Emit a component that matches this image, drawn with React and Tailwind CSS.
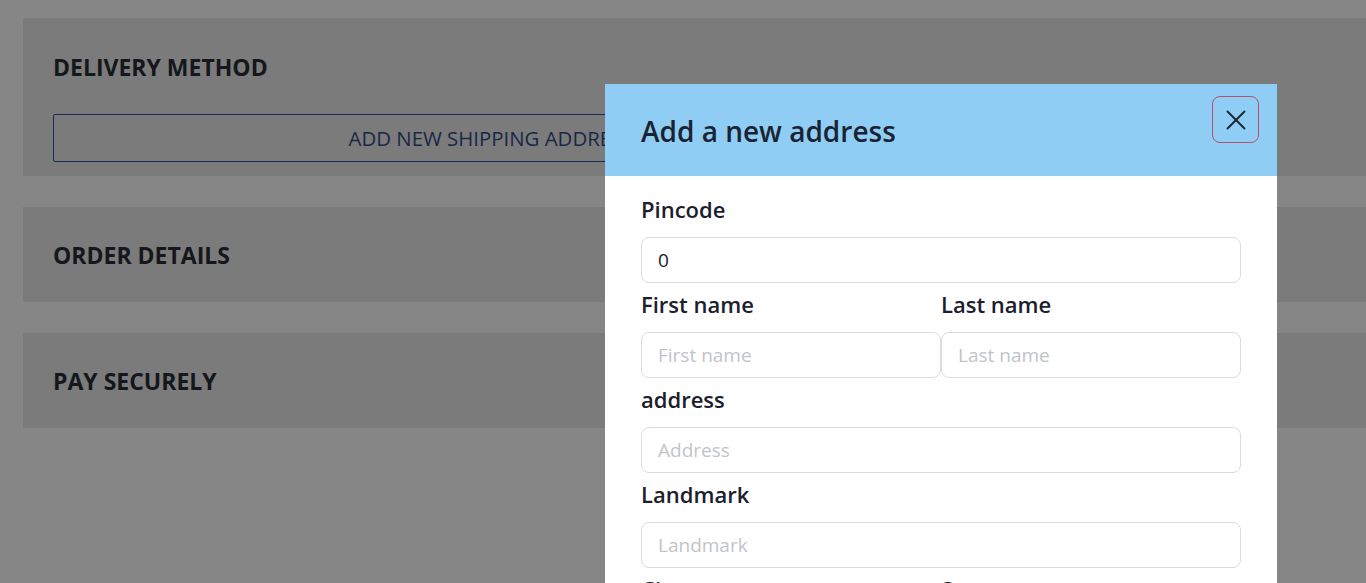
import { X } from 'lucide-react';

const font = { fontFamily: '"Open Sans", "Noto Sans", sans-serif' };

function Field({ label, placeholder, value }) {
  return (
    <div className="flex flex-1 flex-col">
      <label className="mb-[13px] mt-[6px] text-[22px] font-semibold leading-[30px] text-[#1a202c]">{label}</label>
      <input
        readOnly
        defaultValue={value}
        placeholder={placeholder}
        className="h-[46px] w-full rounded-[8px] border border-[#d9dde3] bg-white px-[16px] text-[19px] text-[#1a202c] outline-none placeholder:text-[#c0c4ca]"
      />
    </div>
  );
}

function Panel({ title, children, className }) {
  return (
    <div className={`w-full bg-[#7a7b7a] pl-[30px] ${className}`}>
      <h2 className="text-[23px] font-bold uppercase leading-[30px] text-[#15171c]">{title}</h2>
      {children}
    </div>
  );
}

export default function App() {
  return (
    <div style={font} className="relative h-[583px] w-[1366px] overflow-hidden bg-[#868686]">
      <div className="flex flex-col gap-[31px] pl-[23px] pt-[18px]">
        <Panel title="Delivery method" className="h-[158px] pt-[34px]">
          <button className="mt-[32px] h-[48px] w-[876px] rounded-[2px] border border-[#1b2a52] text-[20.4px] text-[#1a2748]">
            ADD NEW SHIPPING ADDRESS
          </button>
        </Panel>
        <Panel title="Order details" className="flex h-[95px] items-center" />
        <Panel title="Pay securely" className="flex h-[95px] items-center" />
      </div>

      <div className="absolute left-[605px] top-[84px] w-[672px] bg-white">
        <div className="flex h-[92px] items-start justify-between bg-[#90cdf4] pl-[36px] pr-[18px]">
          <h1 className="mt-[29px] text-[28px] font-semibold leading-[36px] text-[#1a2332]">Add a new address</h1>
          <button className="mt-[12px] flex h-[47px] w-[47px] items-center justify-center rounded-[8px] border border-[#b8506a] text-[#1a2332]">
            <X size={34} strokeWidth={1.3} />
          </button>
        </div>
        <div className="flex flex-col px-[36px] pt-[12px] pb-[40px]">
          <Field label="Pincode" value="0" />
          <div className="flex">
            <Field label="First name" placeholder="First name" />
            <Field label="Last name" placeholder="Last name" />
          </div>
          <Field label="address" placeholder="Address" />
          <Field label="Landmark" placeholder="Landmark" />
          <div className="flex">
            <Field label="City" placeholder="City" />
            <Field label="State" placeholder="State" />
          </div>
        </div>
      </div>
    </div>
  );
}
